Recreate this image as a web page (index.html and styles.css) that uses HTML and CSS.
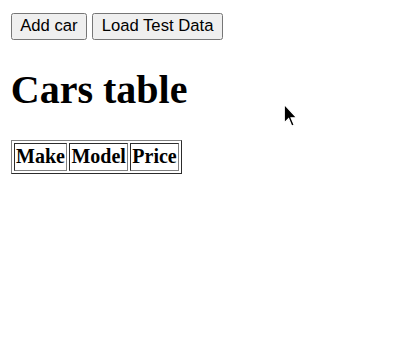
FILE: index.html
```html
<!DOCTYPE html>
<html>
<head>
<meta charset="utf-8">
<link rel="stylesheet" href="styles.css">
</head>
<body>
<div class="toolbar">
<button class="btn">Add car</button>
<button class="btn">Load Test Data</button>
</div>
<h1 class="title">Cars table</h1>
<table class="cars" border="1">
<thead><tr><th>Make</th><th>Model</th><th>Price</th></tr></thead>
<tbody></tbody>
</table>
<svg class="cursor" width="14" height="22" viewBox="0 0 14 22"><path d="M1 1 L1 16 L4.5 12.5 L7 18.5 L9 17.7 L6.5 11.8 L11 11.8 Z" fill="#000" stroke="#fff" stroke-width="1"/></svg>
</body>
</html>
```
FILE: styles.css
```css
html { zoom: 1.25; }
body { font-family: "Liberation Serif", serif; margin: 10.4px 8px 8px 8.6px; }
.btn { font-family: "Liberation Sans", Arial, sans-serif; }
.title { font-family: "Liberation Serif", serif; }
.cars th { font-family: "Liberation Serif", serif; }
.cursor { position: absolute; left: 226.6px; top: 82.4px; }
```
